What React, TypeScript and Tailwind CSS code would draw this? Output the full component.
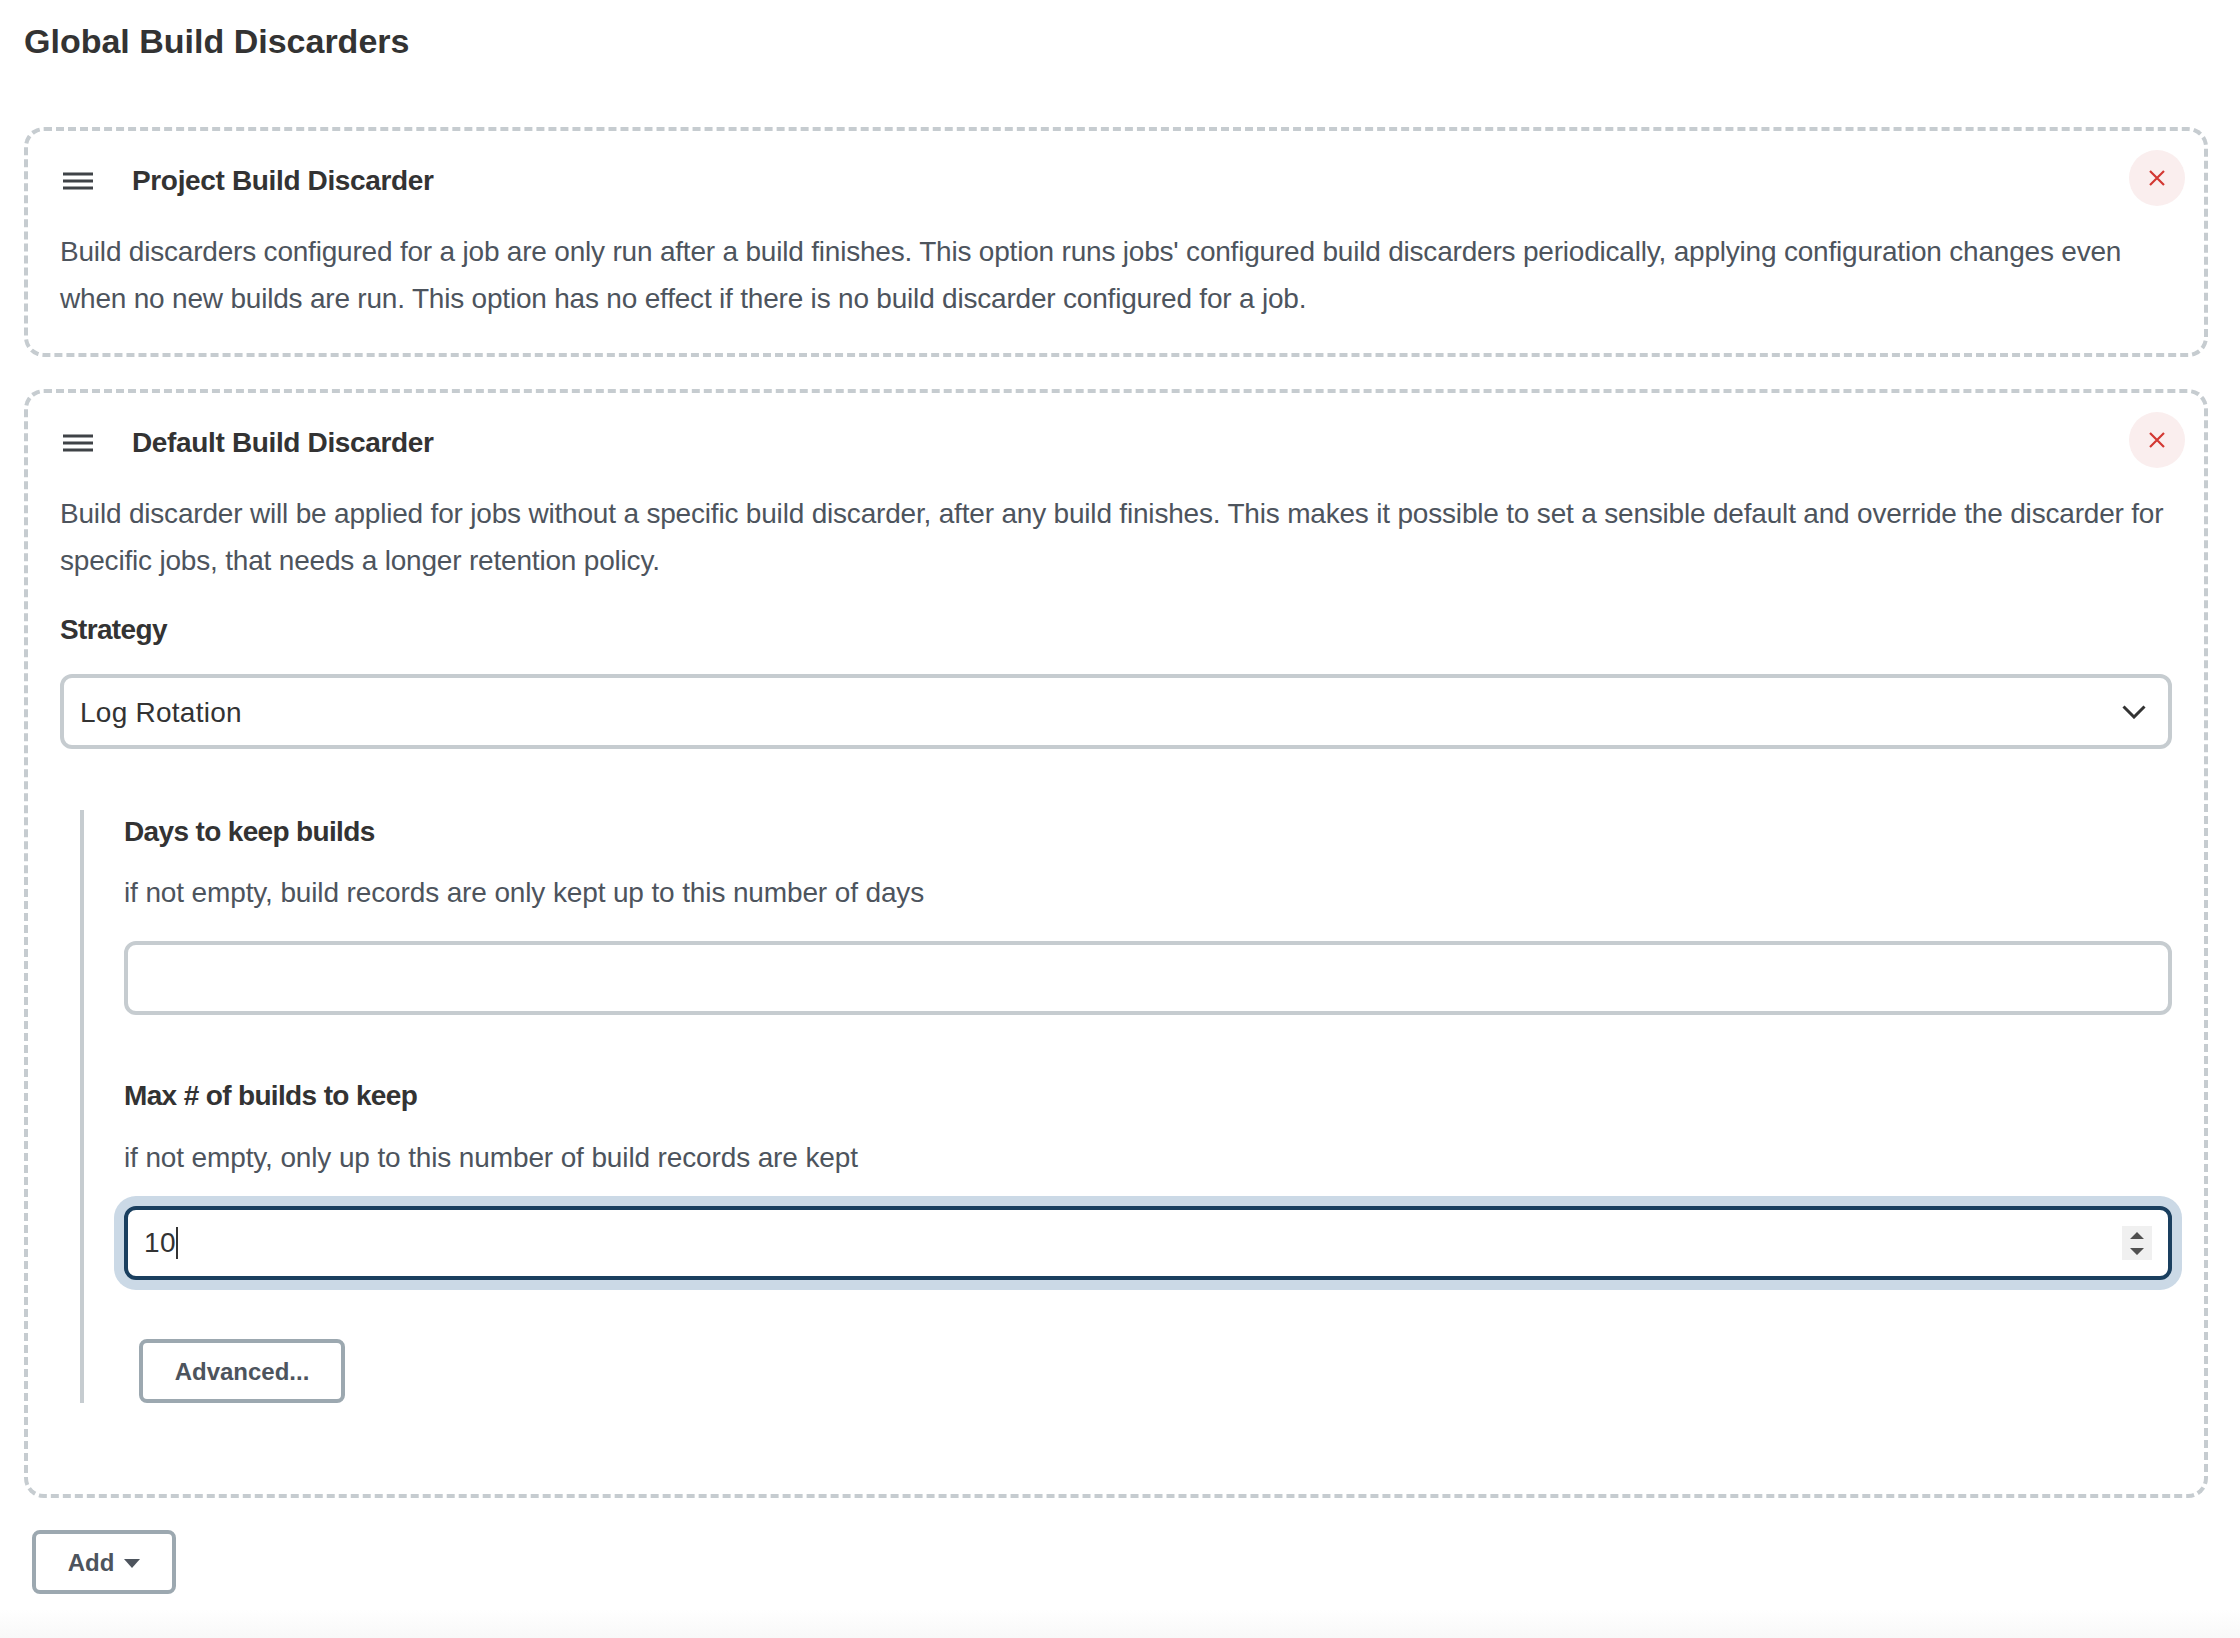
const font = "font-['Liberation_Sans','Helvetica_Neue',Arial,sans-serif]";

const DeleteButton = () => (
  <button className="absolute top-[19px] right-[19px] w-[56px] h-[56px] rounded-full bg-[#faeeee] flex items-center justify-center">
    <svg width="16" height="16" viewBox="0 0 16 16" fill="none" stroke="#d33833" strokeWidth="2.2">
      <path d="M1 1l14 14M15 1L1 15" />
    </svg>
  </button>
);

const Handle = () => (
  <svg width="30" height="18" viewBox="0 0 30 18" className="ml-[3px] shrink-0" fill="none" stroke="#3f4347" strokeWidth="3">
    <path d="M0 2h30M0 9h30M0 16h30" />
  </svg>
);

const CardHeader = ({ title }: { title: string }) => (
  <div className="flex items-center h-[40px] mb-[27px]">
    <Handle />
    <h2 className="ml-[39px] text-[28px] font-bold text-[#333333] tracking-[-0.35px]">{title}</h2>
  </div>
);

const Label = ({ children }: { children: string }) => (
  <div className="h-[40px] leading-[40px] text-[28px] font-bold text-[#333333] tracking-[-0.65px]">{children}</div>
);

const Help = ({ children, className }: { children: string; className: string }) => (
  <div className={`${className} h-[40px] leading-[40px] text-[28px] text-[#4d545d] tracking-[-0.13px]`}>{children}</div>
);

export default function App() {
  return (
    <div className={`${font} relative min-h-[1638px] bg-white pl-[24px] pr-[32px]`}>
      <h1 className="h-[127px] pt-[19px] leading-[44px] text-[34px] font-bold text-[#333333]">
        Global Build Discarders
      </h1>

      <div className="relative border-4 border-dashed border-[#c6ccd0] rounded-[20px] px-[32px] pt-[30px] pb-[31px]">
        <DeleteButton />
        <CardHeader title="Project Build Discarder" />
        <p className="text-[28px] leading-[47px] text-[#4d545d] tracking-[-0.2px]">
          Build discarders configured for a job are only run after a build finishes. This option runs jobs' configured build discarders periodically, applying configuration changes even when no new builds are run. This option has no effect if there is no build discarder configured for a job.
        </p>
      </div>

      <div className="relative mt-[32px] border-4 border-dashed border-[#c6ccd0] rounded-[20px] px-[32px] pt-[30px] pb-[91px]">
        <DeleteButton />
        <CardHeader title="Default Build Discarder" />
        <p className="text-[28px] leading-[47px] text-[#4d545d] tracking-[-0.19px]">
          Build discarder will be applied for jobs without a specific build discarder, after any build finishes. This makes it possible to set a sensible default and override the discarder for specific jobs, that needs a longer retention policy.
        </p>

        <div className="mt-[26px]">
          <Label>Strategy</Label>
        </div>
        <div className="relative mt-[24px]">
          <select className="block w-full h-[75px] appearance-none bg-white border-4 border-[#c6ccd0] rounded-[12px] pl-[16px] pt-[2px] text-[28px] tracking-[0.25px] text-[#333333] outline-none">
            <option>Log Rotation</option>
          </select>
          <svg width="24" height="14" viewBox="0 0 24 14" fill="none" stroke="#333333" strokeWidth="3" className="absolute top-[31px] right-[26px]">
            <path d="M1.5 1.5L12 12L22.5 1.5" />
          </svg>
        </div>

        <div className="mt-[61px] ml-[20px] border-l-4 border-[#c6ccd0] pl-[40px] pt-[2px]">
          <Label>Days to keep builds</Label>
          <Help className="mt-[21px]">if not empty, build records are only kept up to this number of days</Help>
          <input type="text" className="block mt-[28px] w-full h-[74px] bg-white border-4 border-[#c6ccd0] rounded-[12px] outline-none" />

          <div className="mt-[61px]">
            <Label>Max # of builds to keep</Label>
          </div>
          <Help className="mt-[22px]">if not empty, only up to this number of build records are kept</Help>
          <div className="relative mt-[28px] h-[74px] flex items-center bg-white border-4 border-[#1a3f5f] rounded-[12px] pl-[16px] shadow-[0_0_0_10px_#cbd9e6] text-[28px] tracking-[0.5px] text-[#333333]">
            <span>10</span>
            <span className="w-[2px] h-[32px] bg-[#333333]" />
            <div className="absolute top-[16px] right-[16px] w-[30px] h-[34px] bg-[#f0f0f0]">
              <svg width="30" height="34" viewBox="0 0 30 34" fill="#505050">
                <path d="M8 13l7-7 7 7zM8 22h14l-7 7z" />
              </svg>
            </div>
          </div>

          <button className="block mt-[59px] ml-[15px] w-[206px] h-[64px] pt-[2px] bg-white border-4 border-[#9ca8b0] rounded-[8px] text-[24px] font-bold text-[#4d545d]">
            Advanced...
          </button>
        </div>
      </div>

      <button className="flex items-center justify-center gap-[10px] mt-[32px] ml-[8px] w-[144px] h-[64px] pt-[2px] bg-white border-4 border-[#9ca8b0] rounded-[8px] text-[24px] font-bold text-[#4d545d]">
        Add
        <svg width="16" height="9" viewBox="0 0 16 9" fill="#4d545d">
          <path d="M0 0h16L8 9z" />
        </svg>
      </button>

      <div className="absolute inset-x-0 bottom-0 h-[28px] bg-gradient-to-b from-white to-[#f8f8f8]" />
    </div>
  );
}
